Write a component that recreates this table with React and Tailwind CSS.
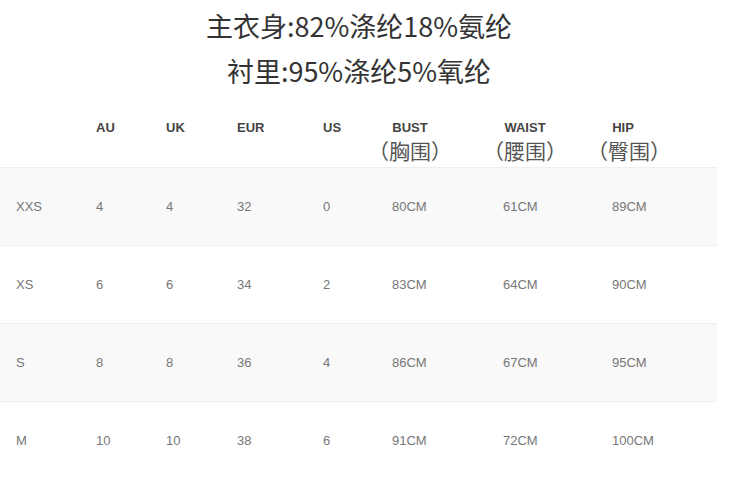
export default function App() {
  const cjk = { fontFamily: '"Noto Sans CJK SC", sans-serif' };
  const rows = [
    ["XXS", "4", "4", "32", "0", "80CM", "61CM", "89CM"],
    ["XS", "6", "6", "34", "2", "83CM", "64CM", "90CM"],
    ["S", "8", "8", "36", "4", "86CM", "67CM", "95CM"],
    ["M", "10", "10", "38", "6", "91CM", "72CM", "100CM"],
  ];
  const grid = "grid grid-cols-[96px_70px_71px_86px_69px_111px_109px_1fr]";

  return (
    <div className="w-[745px] h-[480px] overflow-hidden bg-white font-['Liberation_Sans',Arial,sans-serif]">
      {/* Fabric lines */}
      <div className="pt-[3px] pr-[27px] text-center text-[27px] leading-[45px] text-[#333]" style={cjk}>
        <div>主衣身:82%涤纶18%氨纶</div>
        <div>衬里:95%涤纶5%氧纶</div>
      </div>

      {/* Size table */}
      <div className="mt-[17px] w-[717px]">
        <div className={`${grid} h-[57px] pt-[9px] text-[13px] leading-[18px] font-bold text-[#444]`}>
          <div className="pl-4"></div>
          <div>AU</div>
          <div>UK</div>
          <div>EUR</div>
          <div>US</div>
          <div className="ml-[-22px] w-[80px] flex flex-col items-center">
            <span>BUST</span>
            <span className="mt-px text-[21px] leading-[24px] font-normal text-[#555] whitespace-nowrap" style={cjk}>（胸围）</span>
          </div>
          <div className="ml-[-18px] w-[80px] flex flex-col items-center">
            <span>WAIST</span>
            <span className="mt-px text-[21px] leading-[24px] font-normal text-[#555] whitespace-nowrap" style={cjk}>（腰围）</span>
          </div>
          <div className="ml-[-23px] w-[80px] flex flex-col items-center">
            <span className="-ml-3">HIP</span>
            <span className="mt-px text-[21px] leading-[24px] font-normal text-[#555] whitespace-nowrap" style={cjk}>（臀围）</span>
          </div>
        </div>

        {rows.map((r, i) => (
          <div
            key={r[0]}
            className={`${grid} h-[78px] items-center border-t border-[#efefef] text-[13px] text-[#777] ${i % 2 === 0 ? "bg-[#f9f9f9]" : "bg-white"}`}
          >
            {r.map((c, j) => (
              <div key={j} className={j === 0 ? "pl-4" : ""}>
                {c}
              </div>
            ))}
          </div>
        ))}
      </div>
    </div>
  );
}
